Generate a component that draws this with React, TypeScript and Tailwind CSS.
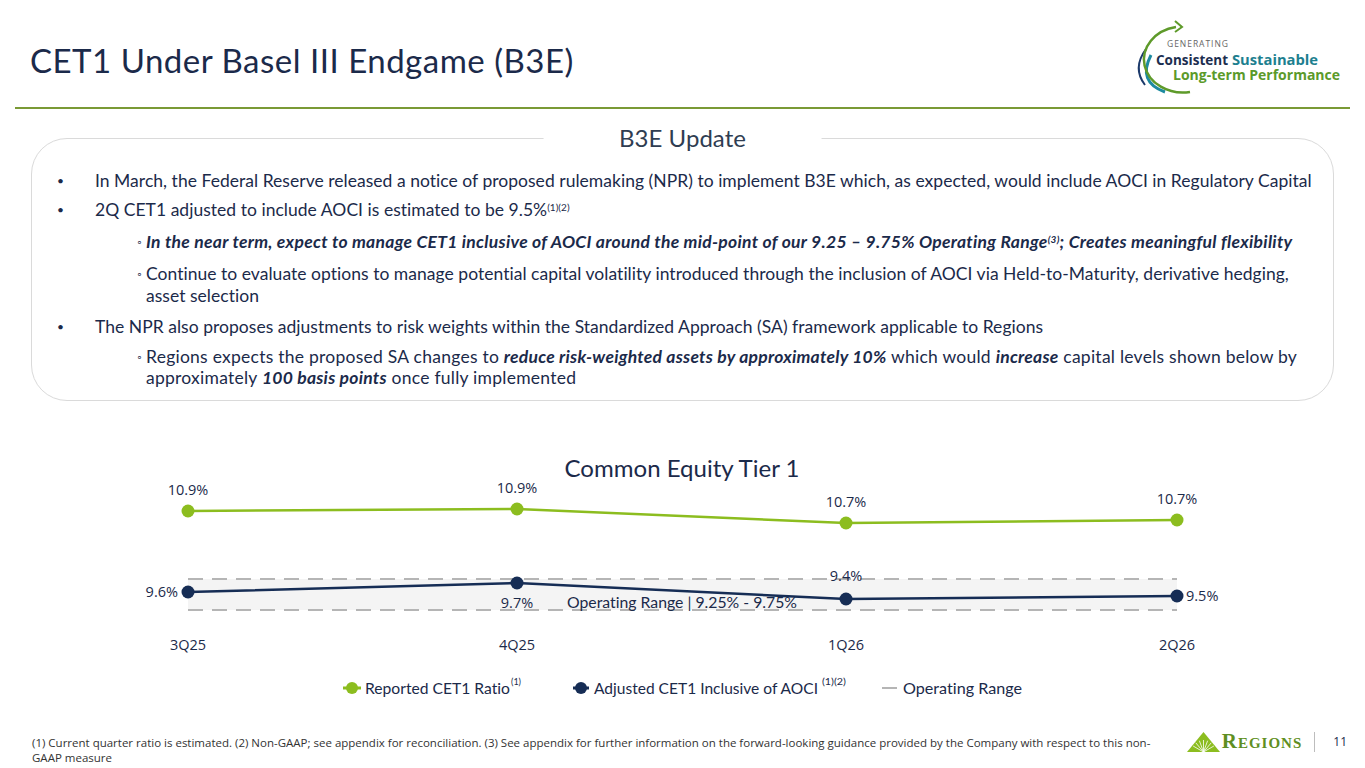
import React from "react";

const NAVY = "#1b2a4a";
const GREEN = "#8cbd1f";
const DNAVY = "#162d55";

function Logo() {
  return (
    <svg width={240} height={107} viewBox="1125 0 240 107" className="block">
      <path d="M1146 49 Q1132 68 1145 85" fill="none" stroke="#1c3a6b" strokeWidth={2} />
      <path d="M1151 55 Q1137 82 1165 92" fill="none" stroke="#1d8aa0" strokeWidth={3} />
      <path d="M1176 27 A39 33 0 1 0 1190 92" fill="none" stroke="#5e9a2a" strokeWidth={2.5} />
      <polyline points="1175,21 1182,27 1175,32" fill="none" stroke="#5e9a2a" strokeWidth={2} />
      <text x={1167} y={47} fontSize={8.5} fill="#666" fontFamily="'Open Sans', sans-serif" letterSpacing={2} textLength={63} lengthAdjust="spacing">GENERATING</text>
      <text x={1156} y={65} fontSize={15} fontWeight={700} fill="#1c2e4f" fontFamily="'Open Sans', sans-serif" textLength={72} lengthAdjust="spacingAndGlyphs">Consistent</text>
      <text x={1232} y={65} fontSize={15} fontWeight={700} fill="#1d7f8f" fontFamily="'Open Sans', sans-serif" textLength={86} lengthAdjust="spacingAndGlyphs">Sustainable</text>
      <text x={1173} y={80} fontSize={15} fontWeight={700} fill="#5b9a2a" fontFamily="'Open Sans', sans-serif" textLength={167} lengthAdjust="spacingAndGlyphs">Long-term Performance</text>
    </svg>
  );
}

function Chart() {
  const xs = [188, 517, 846, 1177];
  const g = [511, 509, 523, 520];
  const n = [592, 583, 599, 596];
  const lbl = { fontFamily: "'Open Sans', sans-serif", fontSize: 14.5, fill: NAVY } as const;
  const src = { fontFamily: "Lato, sans-serif", fill: NAVY } as const;
  return (
    <svg width={1365} height={304} viewBox="0 401 1365 304" className="block">
      <text x={682} y={477} textAnchor="middle" fontSize={23} {...src} textLength={235} lengthAdjust="spacingAndGlyphs">Common Equity Tier 1</text>
      <rect x={188} y={579} width={989} height={31} fill="#f4f4f4" />
      <line x1={188} y1={579} x2={1177} y2={579} stroke="#b5b5b5" strokeWidth={2} strokeDasharray="15 9" />
      <line x1={188} y1={610} x2={1177} y2={610} stroke="#b5b5b5" strokeWidth={2} strokeDasharray="15 9" />
      <text x={567} y={608} fontSize={14.5} {...src} textLength={230} lengthAdjust="spacingAndGlyphs">Operating Range | 9.25% - 9.75%</text>
      <polyline points={xs.map((x, i) => `${x},${g[i]}`).join(" ")} fill="none" stroke={GREEN} strokeWidth={2.5} />
      <polyline points={xs.map((x, i) => `${x},${n[i]}`).join(" ")} fill="none" stroke={DNAVY} strokeWidth={2.5} />
      {xs.map((x, i) => (
        <circle key={"g" + i} cx={x} cy={g[i]} r={6.5} fill={GREEN} />
      ))}
      {xs.map((x, i) => (
        <circle key={"n" + i} cx={x} cy={n[i]} r={6.5} fill={DNAVY} />
      ))}
      <text x={188} y={495} textAnchor="middle" {...lbl}>10.9%</text>
      <text x={517} y={493} textAnchor="middle" {...lbl}>10.9%</text>
      <text x={846} y={507} textAnchor="middle" {...lbl}>10.7%</text>
      <text x={1177} y={504} textAnchor="middle" {...lbl}>10.7%</text>
      <text x={178} y={597} textAnchor="end" {...lbl}>9.6%</text>
      <text x={517} y={608} textAnchor="middle" {...lbl}>9.7%</text>
      <text x={846} y={581} textAnchor="middle" {...lbl}>9.4%</text>
      <text x={1186} y={601} {...lbl}>9.5%</text>
      <text x={188} y={650} textAnchor="middle" {...lbl}>3Q25</text>
      <text x={517} y={650} textAnchor="middle" {...lbl}>4Q25</text>
      <text x={846} y={650} textAnchor="middle" {...lbl}>1Q26</text>
      <text x={1177} y={650} textAnchor="middle" {...lbl}>2Q26</text>

      <line x1={343} y1={688} x2={361} y2={688} stroke={GREEN} strokeWidth={3} />
      <circle cx={352} cy={688} r={6} fill={GREEN} />
      <text x={365} y={694} fontSize={15} {...src} textLength={145} lengthAdjust="spacingAndGlyphs">Reported CET1 Ratio</text>
      <text x={511} y={685} fontSize={9} {...src}>(1)</text>
      <line x1={573} y1={688} x2={589} y2={688} stroke={DNAVY} strokeWidth={3} />
      <circle cx={581} cy={688} r={6} fill={DNAVY} />
      <text x={594} y={694} fontSize={15} {...src} textLength={224} lengthAdjust="spacingAndGlyphs">Adjusted CET1 Inclusive of AOCI</text>
      <text x={822} y={685} fontSize={9} {...src} textLength={24} lengthAdjust="spacingAndGlyphs">(1)(2)</text>
      <line x1={882} y1={688} x2={897} y2={688} stroke="#b5b5b5" strokeWidth={2} />
      <text x={903} y={694} fontSize={15} {...src} textLength={119} lengthAdjust="spacingAndGlyphs">Operating Range</text>
    </svg>
  );
}

function RegionsLogo() {
  const rays = [-60, -40, -20, 0, 20, 40, 60];
  return (
    <div className="flex items-center">
      <svg width={33} height={20} viewBox="0 0 33 20" className="block">
        <polygon points="0,20 16.5,0 33,20" fill="#8cbd1f" />
        {rays.map((a) => {
          const r = (a * Math.PI) / 180;
          return (
            <line key={a} x1={16.5} y1={20} x2={16.5 + Math.sin(r) * 12} y2={20 - Math.cos(r) * 12} stroke="#fff" strokeWidth={0.8} />
          );
        })}
      </svg>
      <span className="ml-[2px] font-['Liberation_Serif',serif] font-bold text-[21px] leading-none tracking-[1px] text-[#5f8f22] [font-variant:small-caps]">Regions</span>
      <div className="ml-[12px] w-px h-[20px] bg-[#bdbdbd]" />
      <span className="ml-[18px] font-['Open_Sans',sans-serif] text-[12px] text-[#1b2a4a]">11</span>
    </div>
  );
}

export default function App() {
  return (
    <div className="w-[1365px] h-[768px] bg-white overflow-hidden font-['Lato',sans-serif] text-[#1b2a4a] [font-variant-ligatures:none]">
      <header className="h-[107px] flex justify-between">
        <h1 className="pl-[30px] pt-[44px] text-[33px] tracking-[0.5px] leading-none font-normal">CET1 Under Basel III Endgame (B3E)</h1>
        <Logo />
      </header>
      <div className="mx-[15px] h-[2px] bg-[#7a9a35]" />
      <section className="relative mt-[29px] ml-[31px] w-[1303px] h-[263px] border border-[#dadada] rounded-[36px] pt-[31px] text-[17.5px] leading-[21.5px] tracking-[0.03px]">
        <div className="absolute left-1/2 -translate-x-1/2 -top-[15px] bg-white px-[76px] text-[24px] leading-[28px] text-[#2f3d52]">
          B3E Update
        </div>
        <div className="flex pl-[25px]">
          <span className="w-[38px] shrink-0 text-[12px]">•</span>
          <span>In March, the Federal Reserve released a notice of proposed rulemaking (NPR) to implement B3E which, as expected, would include AOCI in Regulatory Capital</span>
        </div>
        <div className="flex pl-[25px] mt-[7.5px]">
          <span className="w-[38px] shrink-0 text-[12px]">•</span>
          <span>
            2Q CET1 adjusted to include AOCI is estimated to be 9.5%
            <sup className="text-[10px]">(1)(2)</sup>
          </span>
        </div>
        <div className="flex pl-[105px] mt-[10.5px]">
          <span className="w-[9px] shrink-0 text-[11px]">◦</span>
          <span className="font-bold italic tracking-[0.28px]">
            In the near term, expect to manage CET1 inclusive of AOCI around the mid-point of our 9.25 – 9.75% Operating Range
            <sup className="text-[10px]">(3)</sup>; Creates meaningful flexibility
          </span>
        </div>
        <div className="flex pl-[105px] mt-[10.5px] pr-[28px]">
          <span className="w-[9px] shrink-0 text-[11px]">◦</span>
          <span>
            Continue to evaluate options to manage potential capital volatility introduced through the inclusion of AOCI via Held-to-Maturity, derivative hedging, asset selection
          </span>
        </div>
        <div className="flex pl-[25px] mt-[9.5px]">
          <span className="w-[38px] shrink-0 text-[12px]">•</span>
          <span>The NPR also proposes adjustments to risk weights within the Standardized Approach (SA) framework applicable to Regions</span>
        </div>
        <div className="flex pl-[105px] mt-[8.5px] pr-[28px]">
          <span className="w-[9px] shrink-0 text-[11px]">◦</span>
          <span className="tracking-[0.25px]">
            Regions expects the proposed SA changes to{" "}
            <b className="italic">reduce risk-weighted assets by approximately 10%</b> which would{" "}
            <b className="italic">increase</b> capital levels shown below by approximately{" "}
            <b className="italic">100 basis points</b> once fully implemented
          </span>
        </div>
      </section>
      <Chart />
      <footer className="flex justify-between">
        <div className="pl-[32px] pt-[30px] w-[1185px] font-['Open_Sans',sans-serif] text-[11.5px] leading-[15px] text-[#333]">
          (1) Current quarter ratio is estimated. (2) Non-GAAP; see appendix for reconciliation. (3) See appendix for further information on the forward-looking guidance provided by the Company with respect to this non-
          <br />
          GAAP measure
        </div>
        <div className="pt-[26px] pr-[18px]">
          <RegionsLogo />
        </div>
      </footer>
    </div>
  );
}
